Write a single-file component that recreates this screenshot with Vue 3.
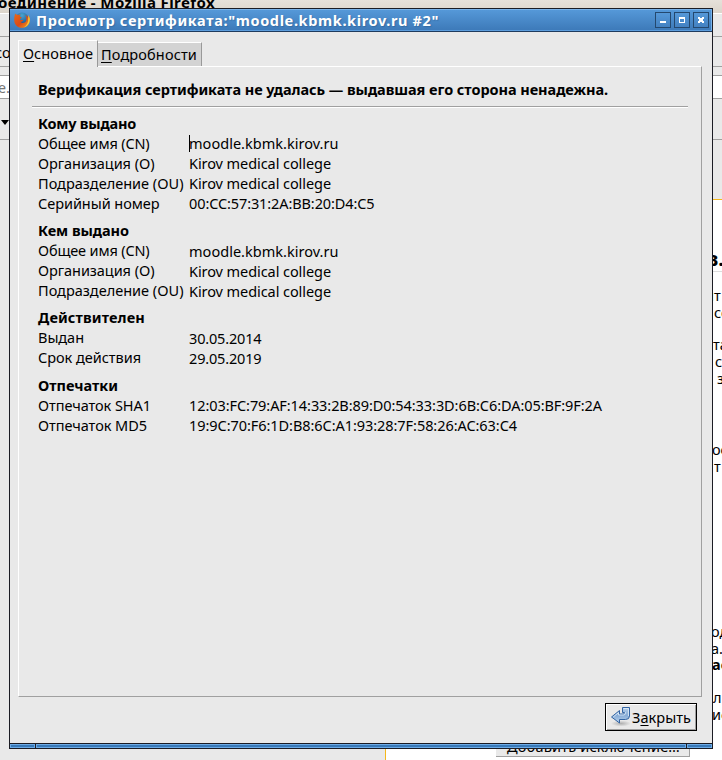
<script setup>
// Tightens or loosens tracking so that a label fills its given width.
const vFit = {
  mounted(el, { value }) {
    if (!value) return
    const natural = el.getBoundingClientRect().width
    el.style.letterSpacing = (value - natural) / el.textContent.length + 'px'
  }
}

const sections = [
  {
    title: 'Кому выдано', w: 98, rows: [
      ['Общее имя (CN)', 111.5, 'moodle.kbmk.kirov.ru', 149.5],
      ['Организация (O)', 116.5, 'Kirov medical college', 142],
      ['Подразделение (OU)', 145.5, 'Kirov medical college', 142],
      ['Серийный номер', 121.5, '00:CC:57:31:2A:BB:20:D4:C5', 185.5]
    ]
  },
  {
    title: 'Кем выдано', w: 91, low: true, rows: [
      ['Общее имя (CN)', 111.5, 'moodle.kbmk.kirov.ru', 149.5],
      ['Организация (O)', 116.5, 'Kirov medical college', 142],
      ['Подразделение (OU)', 145.5, 'Kirov medical college', 142]
    ]
  },
  {
    title: 'Действителен', w: 107, low: true, rows: [
      ['Выдан', 46, '30.05.2014', 72.5],
      ['Срок действия', 103, '29.05.2019', 72.5]
    ]
  },
  {
    title: 'Отпечатки', w: 80, rows: [
      ['Отпечаток SHA1', 113, '12:03:FC:79:AF:14:33:2B:89:D0:54:33:3D:6B:C6:DA:05:BF:9F:2A', 413],
      ['Отпечаток MD5', 109, '19:9C:70:F6:1D:B8:6C:A1:93:28:7F:58:26:AC:63:C4', 328]
    ]
  }
]

const pageText = [
  { t: 'з.', x: 708, y: 260, c: 'big' },
  { t: 'нт', x: 705, y: 296 },
  { t: 'со', x: 714, y: 313 },
  { t: 'та', x: 713, y: 345 },
  { t: 'с', x: 715, y: 362 },
  { t: 'за', x: 717, y: 379 },
  { t: 'ос', x: 712, y: 450 },
  { t: 'т', x: 714, y: 467 },
  { t: 'од', x: 711, y: 632 },
  { t: 'а.', x: 711, y: 649 },
  { t: 'ас', x: 712, y: 665, c: 'bold' },
  { t: 'ли', x: 713, y: 698 },
  { t: 'ис', x: 712, y: 715 }
]
</script>

<template>
  <div class="desktop">
    <div class="browser">
      <div class="browser-title"><span v-fit="227">Соединение - Mozilla Firefox</span></div>
      <div class="menu-row"></div>
      <div class="tab-row"><span>со</span></div>
      <div class="nav-row"><div class="url">е.</div></div>
      <div class="bookmark-row"><i class="arrow"></i></div>
      <div class="browser-body">
        <div class="sidebar"></div>
        <div class="page"></div>
      </div>
    </div>
    <div class="page-rule"></div>
    <span v-for="p in pageText" :key="p.y" class="page-text" :class="p.c" :style="{ left: p.x + 'px', top: p.y - 9 + 'px' }">{{ p.t }}</span>
    <div class="exception"><span v-fit="173">Добавить исключение…</span></div>

    <div class="dialog">
      <header class="titlebar">
        <svg class="fox" width="16" height="16" viewBox="0 0 16 16">
          <defs>
            <radialGradient id="globe" cx=".5" cy=".2" r=".8"><stop offset="0" stop-color="#45a5d4" /><stop offset="1" stop-color="#173a78" /></radialGradient>
            <linearGradient id="fur" x1="0" y1="0" x2="1" y2="1"><stop offset="0" stop-color="#e66a1b" /><stop offset=".55" stop-color="#dc4a16" /><stop offset="1" stop-color="#f5a623" /></linearGradient>
          </defs>
          <circle cx="8" cy="7.6" r="7" fill="url(#globe)" />
          <path d="M1.2 1.6C2 2.6 3 2.9 4.2 2.9 5.2 2.6 6 2.8 6.7 2.8 6 3.5 5.7 4 5.8 4.8L7.7 5.3C7.6 6.2 6.4 6.4 5.9 7.2 6.2 8.2 7.5 8.3 9.3 7.8 9 9.5 7.6 9.8 6.4 9.8 8 11.9 12 11.3 12.4 7.8 12.7 6.1 12.2 4.3 11 3 13.2 3.8 14 5 14.2 6.2 14.5 5 14.2 3.7 13.7 2.8 15.5 4.6 16 6.6 15.8 8.4 15.4 12.8 12.2 15.8 8 15.8 3.2 15.8.2 12.2.2 8 .2 5.5.6 3.5 1.2 1.6Z" fill="url(#fur)" />
          <path d="M13.7 2.8C15.5 4.6 16 6.6 15.8 8.4 15.4 12 13 14.6 9.8 15.5 13 13.2 14.5 9.8 14.2 6.2 14.5 5 14.2 3.7 13.7 2.8Z" fill="#f9c834" />
        </svg>
        <h1><span v-fit="403">Просмотр сертификата:"moodle.kbmk.kirov.ru #2"</span></h1>
        <div class="controls">
          <button><svg width="14" height="14"><path d="M4 8h6v2H4z" fill="#fff" /></svg></button>
          <button><svg width="14" height="14"><path d="M4 4h6v6H4zM5 6v3h4V6z" fill="#fff" fill-rule="evenodd" /></svg></button>
          <button><svg width="14" height="14"><path d="M4 4h2v1h2V4h2v2H9v2h1v2H8V9H6v1H4V8h1V6H4z" fill="#fff" /></svg></button>
        </div>
      </header>

      <main class="content">
        <nav class="tabs">
          <div class="tab active"><span v-fit="70"><u>О</u>сновное</span></div>
          <div class="tab"><span v-fit="96"><u>П</u>одробности</span></div>
        </nav>
        <section class="panel">
          <p class="verdict"><span v-fit="570">Верификация сертификата не удалась — выдавшая его сторона ненадежна.</span></p>
          <div v-for="(s, i) in sections" :key="s.title" class="group" :class="{ low: s.low, last: i === 3 }">
            <h2><span v-fit="s.w">{{ s.title }}</span></h2>
            <div v-for="(r, j) in s.rows" :key="r[0]" class="row">
              <div class="label"><span v-fit="r[1]">{{ r[0] }}</span></div>
              <div class="value" :class="{ caret: i === 0 && j === 0 }"><span v-fit="r[3]">{{ r[2] }}</span></div>
            </div>
          </div>
        </section>
        <footer class="actions">
          <button class="close">
            <svg width="22" height="22" viewBox="0 0 22 22">
              <defs>
                <linearGradient id="arrowFill" x1="0" y1="0" x2="0" y2="1"><stop offset="0" stop-color="#b8d0ea" /><stop offset=".5" stop-color="#86abd6" /><stop offset="1" stop-color="#bcd4ee" /></linearGradient>
                <radialGradient id="shade"><stop offset="0" stop-color="#888" stop-opacity=".6" /><stop offset="1" stop-color="#888" stop-opacity="0" /></radialGradient>
              </defs>
              <ellipse cx="11" cy="17.5" rx="10" ry="3" fill="url(#shade)" />
              <path d="M1.5 11 9.5 4.5V8H13.2Q14.5 8 14.5 6.5H12.5V1.5H19.5V10Q19.5 13.5 15.5 13.5H9.5V17Z" fill="url(#arrowFill)" stroke="#3465a4" stroke-linejoin="round" />
              <path d="M3.2 11 8.5 6.7V9H14Q15.5 9 15.5 6.2M13.5 2.5H18.5V10" fill="none" stroke="#e1edf9" stroke-opacity=".8" />
            </svg>
            <span v-fit="59">З<u>а</u>крыть</span>
          </button>
        </footer>
      </main>
      <div class="resize"><i></i><i></i><i></i></div>
    </div>
  </div>
</template>

<style>
body { margin: 0; overflow: hidden; }
</style>

<style scoped>
* { box-sizing: border-box; }
.desktop { position: relative; width: 722px; height: 760px; overflow: hidden; background: #e9e9e9; color: #000; font: 14.5px/20px "Noto Sans", "Open Sans", sans-serif; white-space: nowrap; }
span { display: inline-block; white-space: pre; }
u { text-decoration-thickness: 1px; text-underline-offset: 2px; text-decoration-skip-ink: none; }
h1, h2, p { margin: 0; font-size: inherit; }
button { font: inherit; color: inherit; padding: 0; }

.browser { height: 760px; display: flex; flex-direction: column; }
.browser-title { height: 13px; background: linear-gradient(#e6e1da, #dcd5cb); font-weight: bold; font-size: 15px; line-height: 8px; display: flex; }
.browser-title span { margin-left: -12px; margin-top: -2px; }
.menu-row { height: 24px; border-top: 1px solid #fff; border-bottom: 1px solid #a0a0a0; }
.tab-row { height: 30px; border-bottom: 1px solid #a0a0a0; padding-top: 5px; }
.tab-row span { margin-left: -5px; }
.nav-row { height: 40px; padding-top: 8px; }
.url { height: 24px; border: solid #a0a0a0; border-width: 1px 0; background: #fff; color: #777; line-height: 23px; text-indent: -2px; }
.bookmark-row { height: 33px; border-bottom: 1px solid #a0a0a0; padding: 13px 1px; }
.arrow { display: block; width: 0; border: solid transparent; border-width: 5px 4px 0; border-top-color: #000; }
.browser-body { flex: 1; display: flex; padding-top: 59px; }
.sidebar { width: 385px; }
.page { flex: 1; background: #fff; border-left: 1px solid #f5b81c; border-top: 1px solid #f5b81c; }
.page-rule { position: absolute; top: 271px; left: 690px; width: 32px; height: 1px; background: #ddd; }
.page-text { position: absolute; line-height: 16px; }
.page-text.big { font-size: 20px; font-weight: bold; }
.page-text.bold { font-weight: bold; }
.exception { position: absolute; left: 496px; top: 728px; width: 194px; height: 29px; background: #e9e9e9; border-right: 1px solid #a0a0a0; border-bottom: 1px solid #a0a0a0; padding: 8px 0 0 11px; }

.dialog { position: absolute; left: 9px; top: 8px; width: 704px; height: 741px; background: #e9e9e9; border: 1px solid #1b1c24; display: flex; flex-direction: column; }
.titlebar { height: 23px; flex: none; display: flex; align-items: center; padding: 0 3px 0 4px; color: #fff; background: linear-gradient(#5598d8, #3c79b8); border-top: 1px solid #79b3ea; border-bottom: 1px solid #1f3c5f; box-shadow: inset 0 -1px #5c9ddd, inset -1px 0 #79b3ea; }
.fox { flex: none; margin-top: -1px; }
h1 { flex: 1; padding-left: 6px; line-height: 20px; margin-top: -2px; text-shadow: 1px 1px 1px #2c5b8d88; }
.controls { display: flex; gap: 3px; margin-top: -1px; }
.controls button { width: 16px; height: 16px; border: 1px solid #24486e; background: linear-gradient(#5598d8, #4381c1); }
.controls svg { display: block; }

.content { flex: 1; display: flex; flex-direction: column; padding: 8px 10px 0 8px; }
.tabs { display: flex; align-items: flex-end; height: 26px; flex: none; }
.tab { height: 24px; background: #d3d3d3; border-top: 1px solid #fff; border-right: 1px solid #999; padding: 1px 0 0 3px; width: 104px; }
.tab.active { width: 80px; height: 27px; margin-bottom: -1px; position: relative; background: #e9e9e9; border-left: 1px solid #fff; padding: 2px 0 0 4px; }
.panel { height: 631px; flex: none; border: 1px solid; border-color: #fff #a0a0a0 #a0a0a0 #fff; padding: 0 13px; }
.verdict { height: 40px; padding: 12px 0 0 6px; font-weight: bold; border-bottom: 1px solid #a0a0a0; box-shadow: 0 1px #fff; margin-bottom: 6px; }
.group { padding-left: 6px; margin-bottom: 7px; }
.group.low + .group.last { margin-top: 8px; }
h2 { height: 20px; }
.row { height: 20px; display: flex; }
.label { width: 151px; flex: none; }
.low .value { padding-top: 1px; }
.caret { position: relative; }
.caret::before { content: ""; position: absolute; left: 0; top: 2px; width: 1px; height: 17px; background: #000; }
.actions { display: flex; justify-content: flex-end; padding: 6px 5px 0 0; }
.close { width: 92px; height: 28px; display: flex; align-items: center; border: 1px solid #000; background: #e9e9e9; box-shadow: inset 1px 1px #fff, inset -1px -1px #a0a0a0; padding: 0 0 0 4px; }
.close svg { flex: none; margin-top: -1px; }
.resize { height: 5px; flex: none; display: flex; gap: 1px; background: #1b1c24; border-top: 1px solid #1b1c24; }
.resize i { height: 4px; border: 1px solid #6cabe7; background: #397ab9; width: 25px; }
.resize i:nth-child(2) { flex: 1; }
</style>
